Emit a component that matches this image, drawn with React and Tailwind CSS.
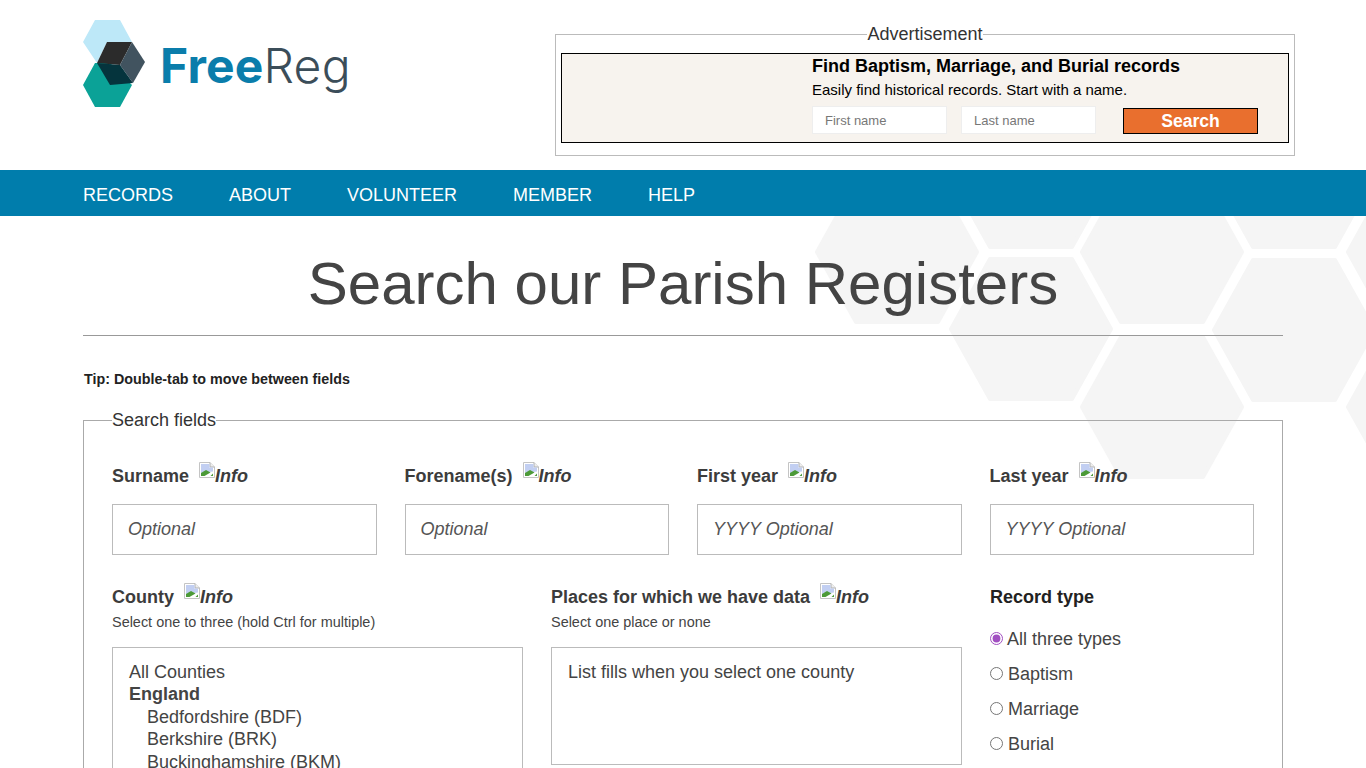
const Broken = () => (
  <svg width="16" height="16" viewBox="0 0 16 16" className="block shrink-0">
    <path d="M0.5 0.5H11L15.5 5V15.5H0.5Z" fill="#fff" stroke="#c4c4c4" />
    <path d="M11 0.5V5H15.5" fill="#eee" stroke="#b0b0b0" />
    <path d="M2 2H10.5V5.5H14V9.5L2 11Z" fill="#c2cff2" />
    <path d="M2 14V11L7 8L11.5 10.5L5.5 14Z" fill="#4c9a38" />
    <path d="M11.5 14L14 11.5V14Z" fill="#4c9a38" />
  </svg>
);

const Label = ({ children, info = true }) => (
  <div className="h-[29px] flex items-start text-[18px] leading-[29px] font-bold text-[#3c3c3c]">
    <span>{children}</span>
    {info && (
      <span className="ml-[10px] flex italic">
        <span className="leading-none">
          <Broken />
        </span>
        <span>Info</span>
      </span>
    )}
  </div>
);

const TextField = ({ label, ph }) => (
  <div>
    <Label>{label}</Label>
    <input
      placeholder={ph}
      className="mt-[13px] block w-full h-[51px] border border-[#bbbbbb] bg-white/60 px-[15px] text-[18px] italic text-[#555] placeholder:text-[#555] outline-none"
    />
  </div>
);

const Radio = ({ label, checked }) => (
  <label className="flex items-center h-[35px] text-[18px] text-[#444]">
    <input
      type="radio"
      name="rt"
      defaultChecked={checked}
      className="m-0 -translate-y-px w-[13px] h-[13px] mr-[5px] accent-[#a14fc1]"
    />
    <span className={checked ? "-ml-px" : ""}>{label}</span>
  </label>
);

const Hex = ({ cx, cy }) => (
  <polygon
    points={`${cx - 80},${cy} ${cx - 41},${cy - 70} ${cx + 41},${cy - 70} ${cx + 80},${cy} ${cx + 41},${cy + 70} ${cx - 41},${cy + 70}`}
    fill="#f5f5f5"
    stroke="#f5f5f5"
    strokeWidth="4"
    strokeLinejoin="round"
  />
);

const Logo = () => (
  <svg width="62" height="88" viewBox="0 0 62 88" className="shrink-0">
    <polygon points="0,22 12,0 37,0 49,22 24,22 14,43" fill="#bde8f8" />
    <polygon points="0,65 12,43 27,43 49,65 37,87 12,87" fill="#0ba297" />
    <polygon points="14,43 24,22 49,22 37,45" fill="#2b2b2b" />
    <polygon points="49,22 62,42 50,63 37,45" fill="#41535f" />
    <polygon points="14,43 37,45 50,63 27,65" fill="#05343d" />
  </svg>
);

export default function App() {
  return (
    <div className="relative h-[768px] w-[1366px] overflow-hidden bg-white font-['Liberation_Sans',Arial,sans-serif] text-[#444]">
      <header className="h-[170px] relative">
        <div className="flex justify-between pl-[83px] pr-[71px]">
          <div className="pt-[20px] flex items-start">
            <Logo />
            <div className="ml-[15px] mt-[16px] font-['Inter',sans-serif] text-[48px] leading-[60px] tracking-[0.2px] whitespace-nowrap">
              <span className="font-bold text-[#0a7dab]">Free</span>
              <span className="font-light text-[#3b4d59]">Reg</span>
            </div>
          </div>
          <fieldset className="mt-[23px] w-[740px] h-[133px] border border-[#bbb] px-[5px] pb-[12px] min-w-0">
            <legend className="mx-auto text-[18px] leading-[22px] text-[#333] px-0">Advertisement</legend>
            <div className="h-[90px] mt-[8px] border border-black bg-[#f7f3ee] pl-[250px] pt-[1px] text-black">
              <div className="text-[18px] leading-[22px] font-bold">Find Baptism, Marriage, and Burial records</div>
              <div className="mt-[3px] text-[15px] leading-[20px]">Easily find historical records. Start with a name.</div>
              <div className="mt-[6px] flex items-center">
                <input placeholder="First name" className="w-[135px] h-[28px] bg-white border border-[#eee] px-[12px] text-[13px] text-[#777] placeholder:text-[#777] outline-none" />
                <input placeholder="Last name" className="ml-[14px] w-[135px] h-[28px] bg-white border border-[#eee] px-[12px] text-[13px] text-[#777] placeholder:text-[#777] outline-none" />
                <button className="ml-[27px] mt-[2px] w-[135px] h-[26px] pt-[1px] bg-[#e96f2e] border border-black text-white font-bold text-[17.6px] leading-none">Search</button>
              </div>
            </div>
          </fieldset>
        </div>
      </header>

      <nav className="h-[46px] bg-[#007dac] pl-[83px] pt-[4px] flex items-center gap-[56px] text-[18px] text-white uppercase">
        <span>Records</span>
        <span>About</span>
        <span>Volunteer</span>
        <span>Member</span>
        <span>Help</span>
      </nav>

      <main className="relative">
        <svg className="absolute left-0 top-0 pointer-events-none" width="1366" height="552" viewBox="0 216 1366 552">
          <Hex cx={897} cy={252} />
          <Hex cx={1031} cy={177} />
          <Hex cx={1031} cy={329} />
          <Hex cx={1162} cy={252} />
          <Hex cx={1162} cy={407} />
          <Hex cx={1294} cy={177} />
          <Hex cx={1294} cy={330} />
          <Hex cx={1428} cy={252} />
          <Hex cx={1428} cy={407} />
        </svg>
        <div className="relative px-[83px] w-[1283px] box-content">
          <div className="w-[1200px]">
            <h1 className="pt-[31px] pb-[15px] text-center text-[60px] leading-[73px] font-normal text-[#444] border-b border-[#999]">
              Search our Parish Registers
            </h1>
            <p className="mt-[35px] ml-[1px] text-[14.3px] leading-[16px] font-bold text-[#222]">Tip: Double-tab to move between fields</p>
            <fieldset className="mt-[22px] border border-[#aaa] px-[28px] pt-[31px] min-w-0 h-[500px]">
              <legend className="text-[18px] leading-[22px] text-[#333]">Search fields</legend>
              <div className="grid grid-cols-4 gap-x-[28px]">
                <TextField label="Surname" ph="Optional" />
                <TextField label="Forename(s)" ph="Optional" />
                <TextField label="First year" ph="YYYY Optional" />
                <TextField label="Last year" ph="YYYY Optional" />
              </div>
              <div className="mt-[28px] grid grid-cols-[411px_411px_1fr] gap-x-[28px]">
                <div>
                  <Label>County</Label>
                  <p className="text-[14.45px] leading-[20px] text-[#444]">Select one to three (hold Ctrl for multiple)</p>
                  <select multiple defaultValue={[]} className="mt-[15px] block w-full h-[150px] border border-[#bbb] bg-transparent py-[14px] px-[16px] text-[18px] text-[#444] outline-none overflow-hidden [&_option]:min-h-[22.4px] [&_optgroup]:-ml-[2px]">
                    <option>All Counties</option>
                    <optgroup label="England">
                      <option>Bedfordshire (BDF)</option>
                      <option>Berkshire (BRK)</option>
                      <option>Buckinghamshire (BKM)</option>
                      <option>Cambridgeshire (CAM)</option>
                    </optgroup>
                  </select>
                </div>
                <div>
                  <Label>Places for which we have data</Label>
                  <p className="text-[14.45px] leading-[20px] text-[#444]">Select one place or none</p>
                  <select multiple defaultValue={[]} className="mt-[15px] block w-full h-[118px] border border-[#bbb] bg-transparent py-[14px] px-[16px] text-[18px] text-[#444] outline-none overflow-hidden">
                    <option>List fills when you select one county</option>
                  </select>
                </div>
                <div>
                  <Label info={false}><span className="text-[#222]">Record type</span></Label>
                  <div className="mt-[10px]">
                    <Radio label="All three types" checked />
                    <Radio label="Baptism" />
                    <Radio label="Marriage" />
                    <Radio label="Burial" />
                  </div>
                </div>
              </div>
            </fieldset>
          </div>
        </div>
      </main>
    </div>
  );
}
